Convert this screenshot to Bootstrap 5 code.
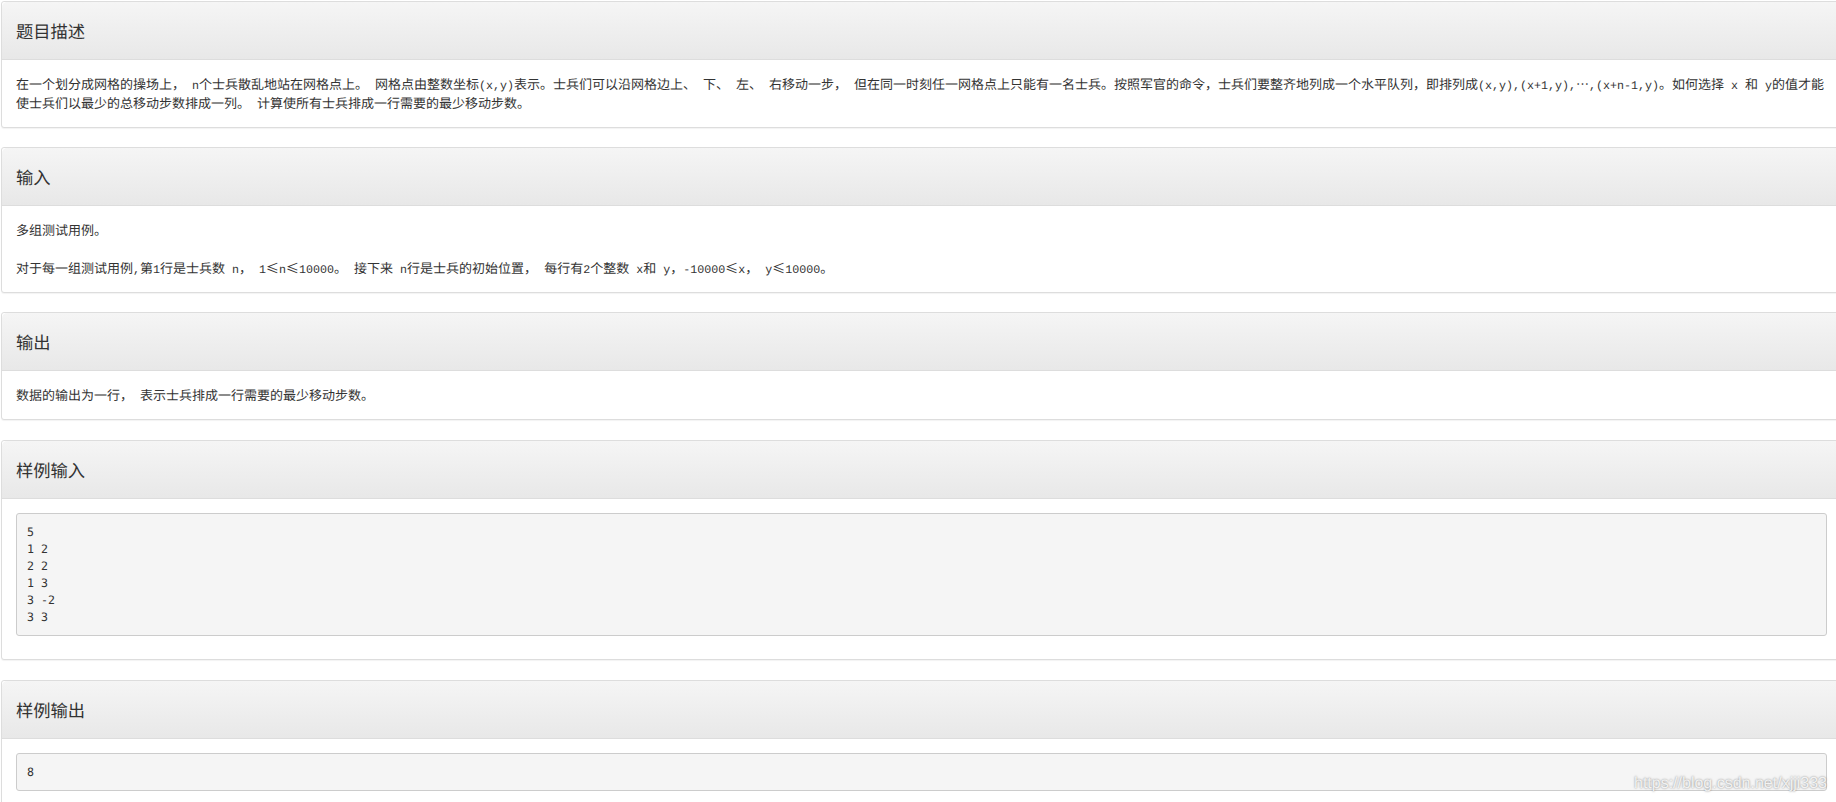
<!DOCTYPE html>
<html lang="zh">
<head>
<meta charset="utf-8">
<title>题目</title>
<link href="https://cdn.jsdelivr.net/npm/bootstrap@5.3.0/dist/css/bootstrap.min.css" rel="stylesheet">
<style>
html, body { height: 802px; overflow: hidden; background: #fff; }
body { color: #333; font-family: "Noto Sans CJK SC", sans-serif; font-size: 13px; line-height: 19px; text-rendering: geometricPrecision; text-spacing-trim: space-all; }
.sheet { width: 1840px; margin-left: 1px; padding-top: 1px; }
.panel-box { border: 1px solid #ddd; border-radius: 3px; margin-bottom: 19px; box-shadow: 0 1px 1px rgba(0,0,0,.05); }
.panel-box.wide-gap { margin-bottom: 20px; }
.panel-box .card-header { height: 58px; padding: 0 14px; background: linear-gradient(to bottom, #f5f5f5, #e8e8e8); border-bottom: 1px solid #ddd; display: flex; align-items: center; }
.panel-title { margin: 0; font-size: 17.3px; font-weight: 400; line-height: 1.1; color: #333; font-family: "Noto Sans CJK SC", sans-serif; }
.panel-box .card-body { padding: 14px 14px 15px; }
.desc { margin: 0; width: 1815px; }
.ltn { font-family: "Liberation Mono", monospace; font-size: 11.67px; line-height: 1; }
.sample { margin: 0 0 8px 0; padding: 10px 10px 9px; width: 1811px; background: #f5f5f5; border: 1px solid #ccc; border-radius: 3px; font-family: "DejaVu Sans Mono", monospace; font-size: 11.6px; line-height: 17px; color: #333; overflow: hidden; }
.mark-url { position: absolute; right: 9px; bottom: 10px; font-family: "Liberation Sans", sans-serif; font-size: 16px; line-height: 1; color: rgba(255,255,255,.85); text-shadow: 0 0 2px rgba(0,0,0,.5); }
</style>
</head>
<body>
<div class="sheet">
  <section class="card panel-box">
    <div class="card-header"><h3 class="panel-title">题目描述</h3></div>
    <div class="card-body">
      <p class="desc">在一个划分成网格的操场上，<span class="ltn"> n</span>个士兵散乱地站在网格点上。<span class="ltn"> </span>网格点由整数坐标<span class="ltn">(x,y)</span>表示。士兵们可以沿网格边上、<span class="ltn"> </span>下、<span class="ltn"> </span>左、<span class="ltn"> </span>右移动一步，<span class="ltn"> </span>但在同一时刻任一网格点上只能有一名士兵。按照军官的命令，士兵们要整齐地列成一个水平队列，即排列成<span class="ltn">(x,y),(x+1,y),</span>…<span class="ltn">,(x+n-1,y)</span>。如何选择<span class="ltn"> x </span>和<span class="ltn"> y</span>的值才能<br>使士兵们以最少的总移动步数排成一列。<span class="ltn"> </span>计算使所有士兵排成一行需要的最少移动步数。</p>
    </div>
  </section>
  <section class="card panel-box">
    <div class="card-header"><h3 class="panel-title">输入</h3></div>
    <div class="card-body">
      <p class="desc">多组测试用例。<br><br>对于每一组测试用例<span class="ltn">,</span>第<span class="ltn">1</span>行是士兵数<span class="ltn"> n</span>，<span class="ltn"> 1</span>≤<span class="ltn">n</span>≤<span class="ltn">10000</span>。<span class="ltn"> </span>接下来<span class="ltn"> n</span>行是士兵的初始位置，<span class="ltn"> </span>每行有<span class="ltn">2</span>个整数<span class="ltn"> x</span>和<span class="ltn"> y</span>，<span class="ltn">-10000</span>≤<span class="ltn">x</span>，<span class="ltn"> y</span>≤<span class="ltn">10000</span>。</p>
    </div>
  </section>
  <section class="card panel-box wide-gap">
    <div class="card-header"><h3 class="panel-title">输出</h3></div>
    <div class="card-body">
      <p class="desc">数据的输出为一行，<span class="ltn"> </span>表示士兵排成一行需要的最少移动步数。</p>
    </div>
  </section>
  <section class="card panel-box wide-gap">
    <div class="card-header"><h3 class="panel-title">样例输入</h3></div>
    <div class="card-body">
      <pre class="sample">5
1 2
2 2
1 3
3 -2
3 3</pre>
    </div>
  </section>
  <section class="card panel-box">
    <div class="card-header"><h3 class="panel-title">样例输出</h3></div>
    <div class="card-body">
      <pre class="sample">8</pre>
    </div>
  </section>
</div>
<div class="mark-url">https://blog.csdn.net/xjji333</div>
<script src="https://cdn.jsdelivr.net/npm/bootstrap@5.3.0/dist/js/bootstrap.bundle.min.js"></script>
</body>
</html>
